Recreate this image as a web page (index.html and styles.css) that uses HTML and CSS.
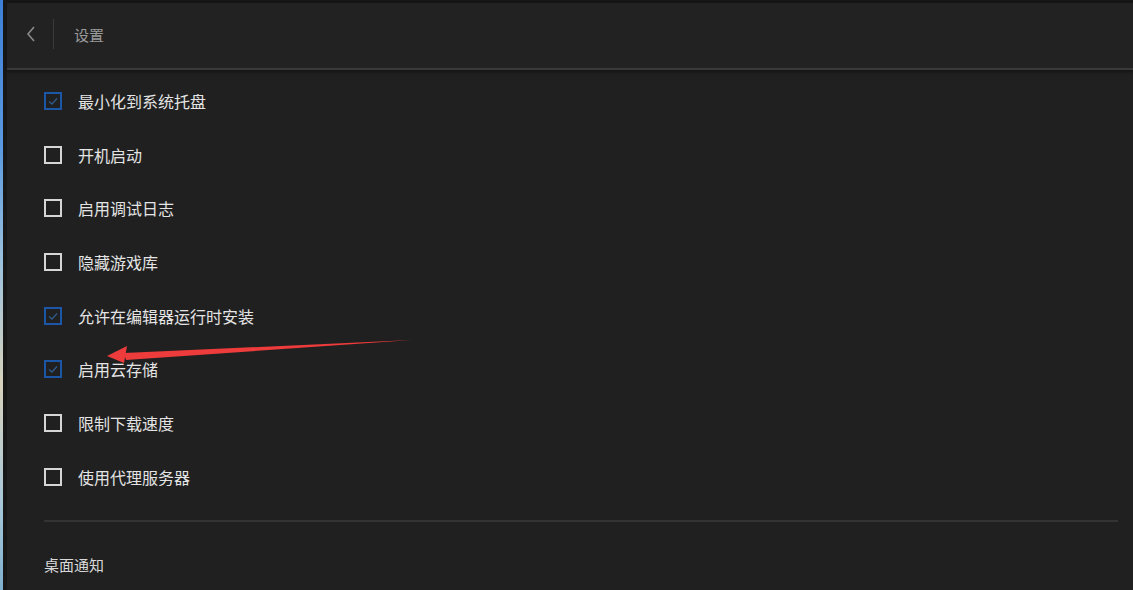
FILE: index.html
```html
<!DOCTYPE html>
<html lang="zh">
<head>
<meta charset="utf-8">
<link rel="stylesheet" href="styles.css">
</head>
<body>
<div class="screen">
  <div class="desktop"></div>
  <div class="edge"></div>
  <div class="window">
    <div class="topbar"></div>
    <header class="header">
      <span class="back">
        <svg width="12" height="18" viewBox="0 0 12 18"><path d="M9 2 L3 9 L9 16" fill="none" stroke="#8a8a8a" stroke-width="1.6"/></svg>
      </span>
      <span class="vsep"></span>
      <span class="title">设置</span>
    </header>
    <main class="content">
      <ul class="options">
        <li class="opt"><span class="cb on"><svg viewBox="0 0 14 14"><path d="M3 7.5 L6 10 L11 4.5" fill="none" stroke="#2f5a8c" stroke-width="1.3"/></svg></span><span class="label">最小化到系统托盘</span></li>
        <li class="opt"><span class="cb"></span><span class="label">开机启动</span></li>
        <li class="opt"><span class="cb"></span><span class="label">启用调试日志</span></li>
        <li class="opt"><span class="cb"></span><span class="label">隐藏游戏库</span></li>
        <li class="opt"><span class="cb on"><svg viewBox="0 0 14 14"><path d="M3 7.5 L6 10 L11 4.5" fill="none" stroke="#2f5a8c" stroke-width="1.3"/></svg></span><span class="label">允许在编辑器运行时安装</span></li>
        <li class="opt"><span class="cb on"><svg viewBox="0 0 14 14"><path d="M3 7.5 L6 10 L11 4.5" fill="none" stroke="#2f5a8c" stroke-width="1.3"/></svg></span><span class="label">启用云存储</span></li>
        <li class="opt"><span class="cb"></span><span class="label">限制下载速度</span></li>
        <li class="opt"><span class="cb"></span><span class="label">使用代理服务器</span></li>
      </ul>
      <hr class="divider">
      <div class="section">桌面通知</div>
    </main>
  </div>
  <svg class="arrow" width="1133" height="590" viewBox="0 0 1133 590">
    <polygon points="412,340 124,353 126,360" fill="#ee3b3b"/>
    <polygon points="107,356 127,346 124,363" fill="#ee3b3b"/>
  </svg>
</div>
</body>
</html>
```
FILE: styles.css
```css
html, body {
  margin: 0;
  padding: 0;
  background: #1f1f1f;
}
.screen {
  position: relative;
  width: 1133px;
  height: 590px;
  display: flex;
  overflow: hidden;
  font-family: "Noto Sans CJK SC", "Noto Sans", sans-serif;
}
.desktop {
  width: 3px;
  background: linear-gradient(#3d7fd6 0%, #5a9ae0 25%, #9ec2dc 45%, #d8d2bc 65%, #a8c8d8 85%, #7fb0cf 100%);
}
.edge {
  width: 4px;
  background: #171717;
}
.window {
  flex: 1;
  display: flex;
  flex-direction: column;
  background: #202020;
}
.topbar {
  height: 3px;
  background: #161616;
}
.header {
  height: 62px;
  padding-bottom: 3px;
  display: flex;
  align-items: center;
  background: #222222;
  border-bottom: 2px solid #3a3a3a;
  box-shadow: 0 2px 3px #141414;
}
.back {
  width: 12px;
  height: 18px;
  margin-left: 18px;
  display: flex;
}
.vsep {
  width: 1px;
  height: 30px;
  background: #3a3a3a;
  margin-left: 16px;
}
.title {
  margin-left: 20px;
  font-size: 15px;
  color: #9a9a9a;
}
.content {
  padding: 0 15px 0 37px;
}
.options {
  list-style: none;
  margin: 0;
  padding: 4px 0 0;
}
.opt {
  height: 53.7px;
  display: flex;
  align-items: center;
}
.cb {
  width: 14px;
  height: 14px;
  border: 2px solid #d6d6d6;
  display: flex;
}
.cb.on {
  border-color: #1c56a6;
}
.cb svg {
  width: 14px;
  height: 14px;
}
.label {
  margin-left: 16px;
  font-size: 16px;
  color: #e4e4e4;
}
.divider {
  border: none;
  height: 2px;
  background: #333333;
  margin: 16px 0 0;
}
.section {
  margin-top: 32px;
  font-size: 15px;
  color: #d8d8d8;
}
.arrow {
  position: absolute;
  left: 0;
  top: 0;
  pointer-events: none;
}
```
